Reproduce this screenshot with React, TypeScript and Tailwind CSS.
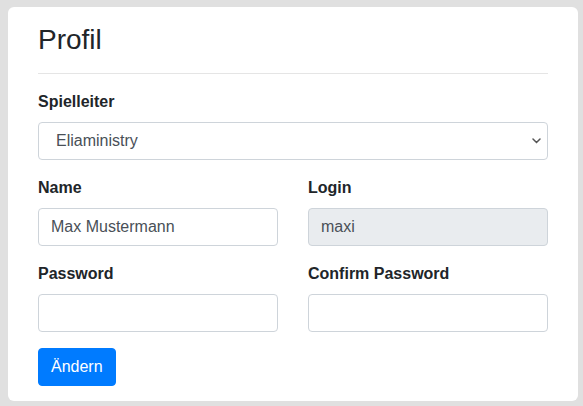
import React from 'react';

const font = { fontFamily: '"Liberation Sans", Arial, sans-serif' };

const inputCls =
  'block w-full h-[38px] px-3 text-base text-[#495057] border border-[#ced4da] rounded-[4px] outline-none';

const Field: React.FC<{ label: string; children: React.ReactNode }> = ({ label, children }) => (
  <div className="mb-4">
    <label className="block mb-2 text-base leading-6 font-bold text-[#212529]">{label}</label>
    {children}
  </div>
);

const App: React.FC = () => {
  return (
    <div className="min-h-[406px] w-full bg-[#e0e0e0] pt-[7px] pl-2 pr-[5px] pb-[5px]" style={font}>
      <div className="bg-white rounded-[6px] w-[570px] px-[30px] pt-4 pb-[15px]">
        <h3 className="text-[28px] leading-[1.2] font-medium text-[#212529]">Profil</h3>
        <hr className="my-4 border-0 border-t border-[rgba(0,0,0,0.1)]" />

        <Field label="Spielleiter">
          <div className="relative">
            <select className={`${inputCls} bg-white appearance-none pl-[17px]`} defaultValue="eli">
              <option value="eli">Eliaministry</option>
            </select>
            <svg
              className="absolute right-[7px] top-[16px] pointer-events-none"
              width="9"
              height="6"
              viewBox="0 0 9 6"
              fill="none"
            >
              <path d="M1 1l3.5 3.5L8 1" stroke="#555" strokeWidth="1.5" strokeLinecap="round" />
            </svg>
          </div>
        </Field>

        <div className="grid grid-cols-2 gap-x-[30px]">
          <Field label="Name">
            <input className={`${inputCls} bg-white`} defaultValue="Max Mustermann" />
          </Field>
          <Field label="Login">
            <input className={`${inputCls} bg-[#e9ecef]`} defaultValue="maxi" readOnly />
          </Field>
          <Field label="Password">
            <input className={`${inputCls} bg-white`} type="password" />
          </Field>
          <Field label="Confirm Password">
            <input className={`${inputCls} bg-white`} type="password" />
          </Field>
        </div>

        <button className="h-[38px] px-3 text-base text-white bg-[#007bff] rounded-[4px] border border-[#007bff]">
          Ändern
        </button>
      </div>
    </div>
  );
};

export default App;
